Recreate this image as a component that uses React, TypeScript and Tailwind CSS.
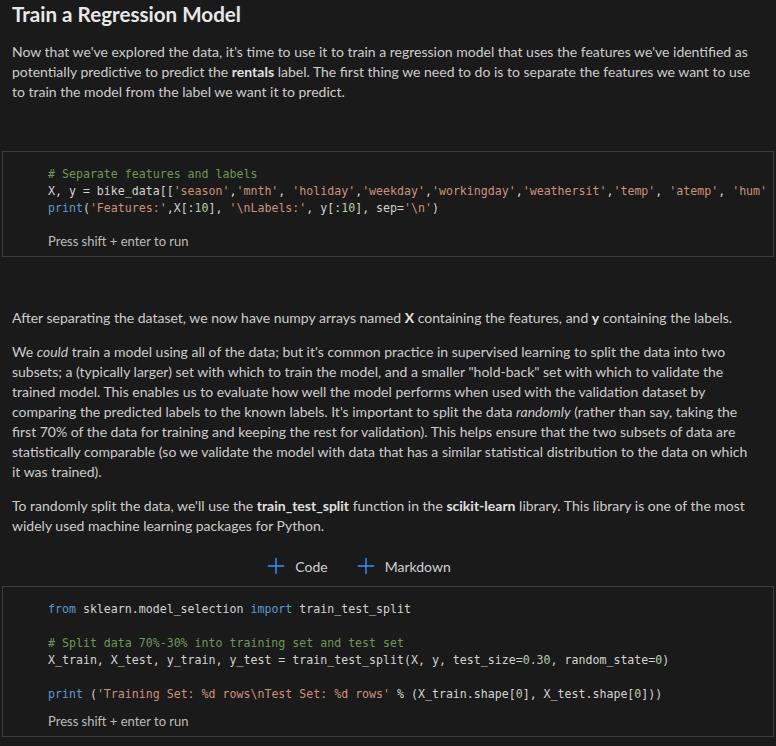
import { Plus } from "lucide-react";

const prose = "font-['Lato','Open_Sans',sans-serif]";
const mono = "font-['DejaVu_Sans_Mono','Liberation_Mono',monospace]";

// token colours
const K = ({ children }: { children: React.ReactNode }) => (
  <span className="text-[#569cd6]">{children}</span>
);
const S = ({ children }: { children: React.ReactNode }) => (
  <span className="text-[#ce9178]">{children}</span>
);
const C = ({ children }: { children: React.ReactNode }) => (
  <span className="text-[#6a9955]">{children}</span>
);
const N = ({ children }: { children: React.ReactNode }) => (
  <span className="text-[#b5cea8]">{children}</span>
);

function CodeCell({
  lines,
  hintGap,
}: {
  lines: React.ReactNode[];
  hintGap: string;
}) {
  return (
    <div className="mx-[2px] border border-[#3c3c3c] pl-[45px] pr-2 pt-[14px] pb-[5px]">
      <div className={`${mono} text-[11.6px] leading-[17px] text-[#d4d4d4] whitespace-pre overflow-hidden`}>
        {lines.map((l, i) => (
          <div key={i} className="h-[17px]">
            {l}
          </div>
        ))}
      </div>
      <div className={`${prose} ${hintGap} text-[13px] leading-[20px] text-[#bdbdbd]`}>
        Press shift + enter to run
      </div>
    </div>
  );
}

export default function App() {
  return (
    <div className={`min-h-[746px] w-[776px] bg-[#1b1a1a] text-[#cccccc] ${prose} overflow-hidden`}>
      <div className="pl-3 pr-[20px]">
        <h1 className="text-[20.6px] font-bold leading-[28px] text-[#e8e8e8]">
          Train a Regression Model
        </h1>
        <p className="mt-[14px] text-[14px] leading-[20px]">
          Now that we've explored the data, it's time to use it to train a regression model that uses the
          features we've identified as potentially predictive to predict the <b className="text-[#e0e0e0]">rentals</b> label. The first
          thing we need to do is to separate the features we want to use to train the model from the label we
          want it to predict.
        </p>
      </div>

      <div className="mt-[49px]">
        <CodeCell
          hintGap="mt-[14px]"
          lines={[
            <C># Separate features and labels</C>,
            <>
              X, y = bike_data[[<S>'season'</S>,<S>'mnth'</S>, <S>'holiday'</S>,<S>'weekday'</S>,<S>'workingday'</S>,
              <S>'weathersit'</S>,<S>'temp'</S>, <S>'atemp'</S>, <S>'hum'</S>, <S>'windspeed'</S>]].values, bike_data[
              <S>'rentals'</S>].values
            </>,
            <>
              <K>print</K>(<S>'Features:'</S>,X[:<N>10</N>], <S>'\nLabels:'</S>, y[:<N>10</N>], sep=<S>'\n'</S>)
            </>,
          ]}
        />
      </div>

      <div className="pl-3 pr-[20px] mt-[51px] text-[14px] leading-[20px]">
        <p>
          After separating the dataset, we now have numpy arrays named <b className="text-[#e0e0e0]">X</b> containing the features,
          and <b className="text-[#e0e0e0]">y</b> containing the labels.
        </p>
        <p className="mt-[14px]">
          We <i>could</i> train a model using all of the data; but it's common practice in supervised learning to
          split the data into two subsets; a (typically larger) set with which to train the model, and a smaller
          "hold-back" set with which to validate the trained model. This enables us to evaluate how well the model
          performs when used with the validation dataset by comparing the predicted labels to the known labels.
          It's important to split the data <i>randomly</i> (rather than say, taking the first 70% of the data for
          training and keeping the rest for validation). This helps ensure that the two subsets of data are
          statistically comparable (so we validate the model with data that has a similar statistical
          distribution to the data on which it was trained).
        </p>
        <p className="mt-[14px]">
          To randomly split the data, we'll use the <b className="text-[#e0e0e0]">train_test_split</b> function in
          the <b className="text-[#e0e0e0]">scikit-learn</b> library. This library is one of the most widely used
          machine learning packages for Python.
        </p>
      </div>

      <div className="flex justify-center gap-[25px] h-[50px] pt-[10px] pr-[62px] items-center text-[14px] text-[#d0d0d0]">
        <button className="flex items-center gap-[6px]">
          <Plus size={26} strokeWidth={1.3} className="text-[#3794ff]" />
          Code
        </button>
        <button className="flex items-center gap-[6px]">
          <Plus size={26} strokeWidth={1.3} className="text-[#3794ff]" />
          Markdown
        </button>
      </div>

      <CodeCell
        hintGap="mt-[8px]"
        lines={[
          <>
            <K>from</K> sklearn.model_selection <K>import</K> train_test_split
          </>,
          <> </>,
          <C># Split data 70%-30% into training set and test set</C>,
          <>
            X_train, X_test, y_train, y_test = train_test_split(X, y, test_size=<N>0.30</N>, random_state=<N>0</N>)
          </>,
          <> </>,
          <>
            <K>print</K> (<S>'Training Set: %d rows\nTest Set: %d rows'</S> % (X_train.shape[<N>0</N>], X_test.shape[
            <N>0</N>]))
          </>,
        ]}
      />
    </div>
  );
}
